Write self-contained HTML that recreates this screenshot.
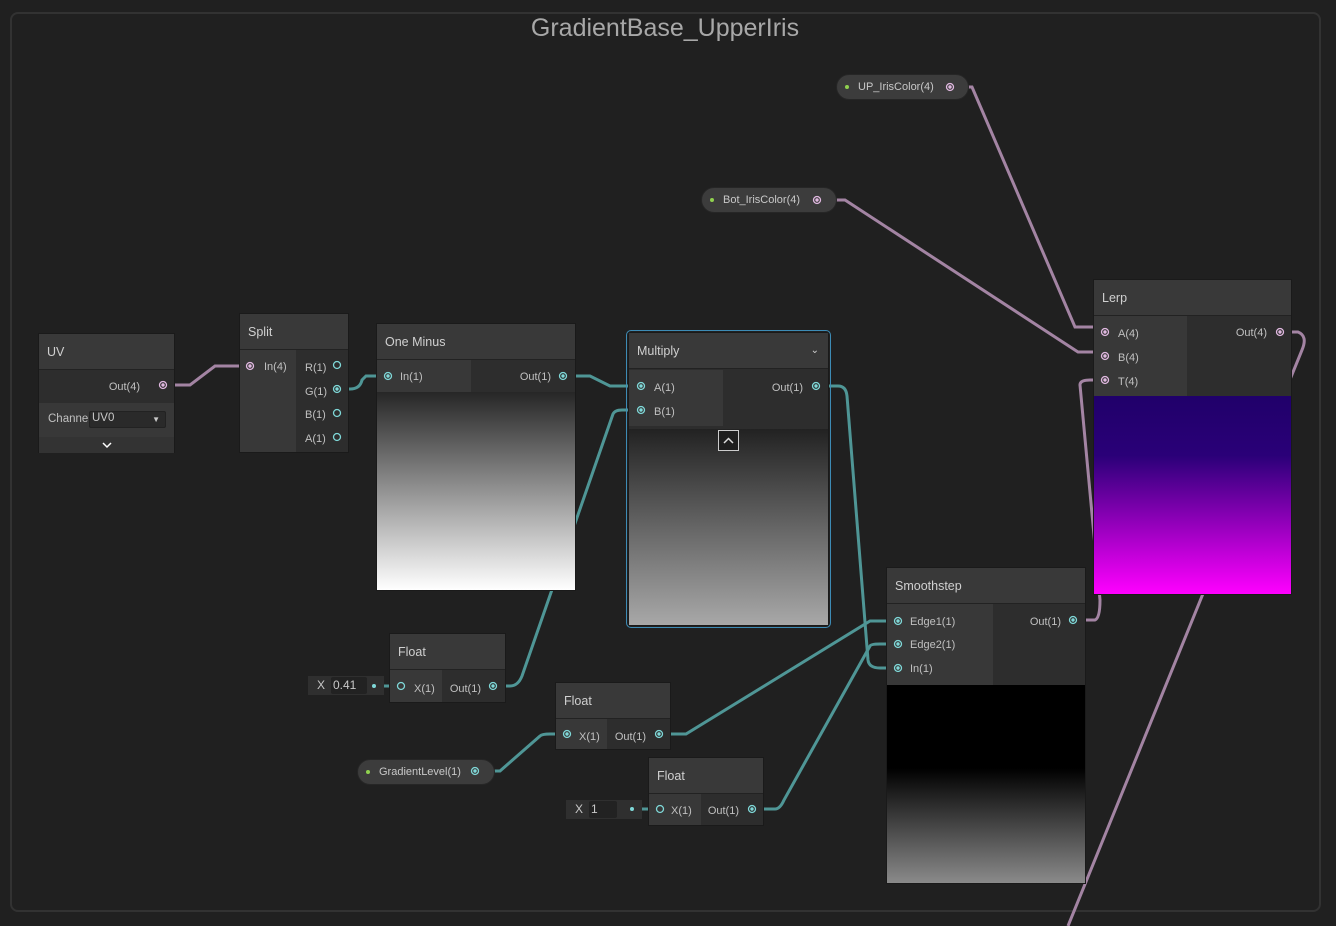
<!DOCTYPE html><html><head><meta charset="utf-8"><style>
*{margin:0;padding:0;box-sizing:border-box}
body{width:1336px;height:926px;background:#202020;position:relative;overflow:hidden;font-family:"Liberation Sans",sans-serif;color:#c8c8c8}
.grp{position:absolute;left:10px;top:12px;width:1311px;height:900px;border:2px solid #323232;border-radius:8px}
.title{position:absolute;left:0;width:1330px;top:14px;text-align:center;font-size:25px;color:#a8a8a8}
.n{position:absolute;background:#2d2d2d;border:1px solid #1a1a1a;z-index:1}
.h{position:absolute;left:0;right:0;top:0;background:#393939;font-size:12.5px;padding-left:8px;color:#d0d0d0;border-bottom:1px solid #222}
.c{position:absolute;background:#383838}
.t{position:absolute;font-size:11px;color:#c0c0c0;white-space:nowrap}
.pill{position:absolute;background:#3c3c3c;border-radius:13px;font-size:11px;color:#c8c8c8;z-index:1;border:1px solid #262626}
.fld{position:absolute;background:#2f2f2f;font-size:12px;color:#c8c8c8;z-index:1}
svg{position:absolute;left:0;top:0}
</style></head><body>
<div class="grp"></div>
<div class="title">GradientBase_UpperIris</div>
<svg width="1336" height="926" style="z-index:0" fill="none" stroke-width="3">
<g stroke="#a384a3">
<path d="M163 385H190L215 366H250"/>
<path d="M950 87H972L1075 327H1105"/>
<path d="M817 200H845L1078 352H1105"/>
<path d="M1280 332H1298Q1308 336 1302 350L1068 926"/>
<path d="M1085 620H1095Q1100 618 1100 600L1080 385Q1080 380 1090 380H1105"/>
</g>
<g stroke="#4f9696">
<path d="M337 389H350Q360 389 362 380L366 376H388"/>
<path d="M563 376H590L610 386H641"/>
<path d="M493 686H510Q518 686 522 676L613 414Q615 410 622 410H641"/>
<path d="M816 386H838Q846 386 847 396L868 660Q869 668 880 668H898"/>
<path d="M659 734H686L870 621H898"/>
<path d="M752 809H775Q780 809 784 800L870 646Q871 644 880 644H898"/>
<path d="M475 771H500L540 736Q542 734 550 734H567"/>
<path d="M374 686H400"/><path d="M632 809H660"/>
</g>
</svg>
<!-- UV -->
<div class="n" style="left:38px;top:333px;width:137px;height:120px">
<div class="h" style="height:36px;line-height:36px">UV</div>
<div class="t" style="right:34px;top:47px">Out(4)</div>
<div style="position:absolute;left:0;right:0;top:69px;height:34px;background:#383838"></div>
<div class="t" style="left:9px;top:79px;font-size:11.5px">Channe</div>
<div style="position:absolute;left:50px;top:77px;width:77px;height:17px;background:#2a2a2a;border:1px solid #222;border-radius:2px;font-size:11.5px;padding-left:2px">UV0<span style="position:absolute;right:5px;top:0;font-size:8px;line-height:15px">▼</span></div>
<div style="position:absolute;left:0;right:0;top:103px;height:16px;background:#333"><svg width="135" height="16"><path d="M64 6L68 10L72 6" stroke="#fff" stroke-width="1.5" fill="none"/></svg></div>
</div>
<!-- Split -->
<div class="n" style="left:239px;top:313px;width:110px;height:140px">
<div class="h" style="height:36px;line-height:36px">Split</div>
<div class="c" style="left:0;width:56px;top:36px;bottom:0"></div>
<div class="t" style="left:24px;top:47px">In(4)</div>
<div class="t" style="left:65px;top:48px">R(1)</div>
<div class="t" style="left:65px;top:72px">G(1)</div>
<div class="t" style="left:65px;top:95px">B(1)</div>
<div class="t" style="left:65px;top:119px">A(1)</div>
</div>
<!-- One Minus -->
<div class="n" style="left:376px;top:323px;width:200px;height:268px">
<div class="h" style="height:36px;line-height:36px">One Minus</div>
<div class="c" style="left:0;width:94px;top:36px;height:32px"></div>
<div class="t" style="left:23px;top:47px">In(1)</div>
<div class="t" style="right:24px;top:47px">Out(1)</div>
<div style="position:absolute;left:0;right:0;top:68px;bottom:0;background:linear-gradient(#262626,#fff)"></div>
</div>
<!-- Multiply -->
<div class="n" style="left:628px;top:332px;width:201px;height:294px;outline:1px solid #3d8bb5;outline-offset:1px;border-radius:3px">
<div class="h" style="height:36px;line-height:36px">Multiply<span style="position:absolute;right:9px;font-size:10px">⌄</span></div>
<div class="c" style="left:0;width:94px;top:37px;height:56px"></div>
<div class="t" style="left:25px;top:49px">A(1)</div>
<div class="t" style="left:25px;top:73px">B(1)</div>
<div class="t" style="right:25px;top:49px">Out(1)</div>
<div style="position:absolute;left:0;right:0;top:96px;bottom:0;background:linear-gradient(#222 0%,#a8a8a8 100%)"></div>
</div>
<div style="position:absolute;left:718px;top:430px;width:21px;height:21px;border:1px solid #ccc;background:#1e1e1e;z-index:2"><svg width="19" height="19"><path d="M5 12L9.5 7.5L14 12" stroke="#ddd" stroke-width="1.5" fill="none"/></svg></div>
<!-- Lerp -->
<div class="n" style="left:1093px;top:279px;width:199px;height:316px">
<div class="h" style="height:36px;line-height:36px">Lerp</div>
<div class="c" style="left:0;width:93px;top:36px;height:80px"></div>
<div class="t" style="left:24px;top:48px">A(4)</div>
<div class="t" style="left:24px;top:72px">B(4)</div>
<div class="t" style="left:24px;top:96px">T(4)</div>
<div class="t" style="right:24px;top:47px">Out(4)</div>
<div style="position:absolute;left:0;right:0;top:116px;bottom:0;background:linear-gradient(#20006a,#2a0078 30%,#ff00ff)"></div>
</div>
<!-- Smoothstep -->
<div class="n" style="left:886px;top:567px;width:200px;height:317px">
<div class="h" style="height:36px;line-height:36px">Smoothstep</div>
<div class="c" style="left:0;width:106px;top:36px;height:81px"></div>
<div class="t" style="left:23px;top:48px">Edge1(1)</div>
<div class="t" style="left:23px;top:71px">Edge2(1)</div>
<div class="t" style="left:23px;top:95px">In(1)</div>
<div class="t" style="right:24px;top:48px">Out(1)</div>
<div style="position:absolute;left:0;right:0;top:117px;bottom:0;background:linear-gradient(#000 0%,#000 42%,#8a8a8a 100%)"></div>
</div>
<!-- Floats -->
<div class="n" style="left:389px;top:633px;width:117px;height:70px">
<div class="h" style="height:36px;line-height:36px">Float</div>
<div class="c" style="left:0;width:52px;top:36px;bottom:0"></div>
<div class="t" style="left:24px;top:49px">X(1)</div><div class="t" style="right:24px;top:49px">Out(1)</div>
</div>
<div class="n" style="left:555px;top:682px;width:116px;height:68px">
<div class="h" style="height:36px;line-height:36px">Float</div>
<div class="c" style="left:0;width:51px;top:36px;bottom:0"></div>
<div class="t" style="left:23px;top:48px">X(1)</div><div class="t" style="right:24px;top:48px">Out(1)</div>
</div>
<div class="n" style="left:648px;top:757px;width:116px;height:69px">
<div class="h" style="height:36px;line-height:36px">Float</div>
<div class="c" style="left:0;width:52px;top:36px;bottom:0"></div>
<div class="t" style="left:22px;top:47px">X(1)</div><div class="t" style="right:24px;top:47px">Out(1)</div>
</div>
<div class="fld" style="left:308px;top:676px;width:76px;height:19px"><span style="position:absolute;left:9px;top:2px">X</span><span style="position:absolute;left:23px;top:1px;width:36px;height:17px;background:#222;border-radius:2px;padding-left:2px;line-height:17px">0.41</span></div>
<div class="fld" style="left:566px;top:800px;width:76px;height:19px"><span style="position:absolute;left:9px;top:2px">X</span><span style="position:absolute;left:23px;top:1px;width:28px;height:17px;background:#222;border-radius:2px;padding-left:2px;line-height:17px">1</span></div>
<!-- pills -->
<div class="pill" style="left:836px;top:74px;width:133px;height:26px;line-height:25px;padding-left:21px">UP_IrisColor(4)</div>
<div class="pill" style="left:701px;top:187px;width:136px;height:26px;line-height:25px;padding-left:21px">Bot_IrisColor(4)</div>
<div class="pill" style="left:357px;top:759px;width:138px;height:26px;line-height:25px;padding-left:21px">GradientLevel(1)</div>
<svg width="1336" height="926" style="z-index:3">
<g fill="#8fd14f"><circle cx="847" cy="87" r="2"/><circle cx="712" cy="200" r="2"/><circle cx="368" cy="772" r="2"/></g>
<g stroke="#e0b8e0" stroke-width="1.3" fill="none">
<circle cx="163" cy="385" r="3.5"/><circle cx="250" cy="366" r="3.5"/><circle cx="950" cy="87" r="3.5"/><circle cx="817" cy="200" r="3.5"/><circle cx="1105" cy="332" r="3.5"/><circle cx="1105" cy="356" r="3.5"/><circle cx="1105" cy="380" r="3.5"/><circle cx="1280" cy="332" r="3.5"/>
</g>
<g fill="#e0b8e0"><circle cx="163" cy="385" r="1.7"/><circle cx="250" cy="366" r="1.7"/><circle cx="950" cy="87" r="1.7"/><circle cx="817" cy="200" r="1.7"/><circle cx="1105" cy="332" r="1.7"/><circle cx="1105" cy="356" r="1.7"/><circle cx="1105" cy="380" r="1.7"/><circle cx="1280" cy="332" r="1.7"/></g>
<g stroke="#7fd8d8" stroke-width="1.3" fill="none">
<circle cx="337" cy="365" r="3.5"/><circle cx="337" cy="389" r="3.5"/><circle cx="337" cy="413" r="3.5"/><circle cx="337" cy="437" r="3.5"/>
<circle cx="388" cy="376" r="3.5"/><circle cx="563" cy="376" r="3.5"/><circle cx="641" cy="386" r="3.5"/><circle cx="641" cy="410" r="3.5"/><circle cx="816" cy="386" r="3.5"/>
<circle cx="898" cy="621" r="3.5"/><circle cx="898" cy="644" r="3.5"/><circle cx="898" cy="668" r="3.5"/><circle cx="1073" cy="620" r="3.5"/>
<circle cx="401" cy="686" r="3.5"/><circle cx="493" cy="686" r="3.5"/><circle cx="567" cy="734" r="3.5"/><circle cx="659" cy="734" r="3.5"/><circle cx="660" cy="809" r="3.5"/><circle cx="752" cy="809" r="3.5"/><circle cx="475" cy="771" r="3.5"/>
</g>
<g fill="#7fd8d8"><circle cx="337" cy="389" r="1.7"/><circle cx="388" cy="376" r="1.7"/><circle cx="563" cy="376" r="1.7"/><circle cx="641" cy="386" r="1.7"/><circle cx="641" cy="410" r="1.7"/><circle cx="816" cy="386" r="1.7"/><circle cx="898" cy="621" r="1.7"/><circle cx="898" cy="644" r="1.7"/><circle cx="898" cy="668" r="1.7"/><circle cx="1073" cy="620" r="1.7"/><circle cx="493" cy="686" r="1.7"/><circle cx="567" cy="734" r="1.7"/><circle cx="659" cy="734" r="1.7"/><circle cx="752" cy="809" r="1.7"/><circle cx="475" cy="771" r="1.7"/><circle cx="374" cy="686" r="2"/><circle cx="632" cy="809" r="2"/></g>
</svg>
</body></html>
